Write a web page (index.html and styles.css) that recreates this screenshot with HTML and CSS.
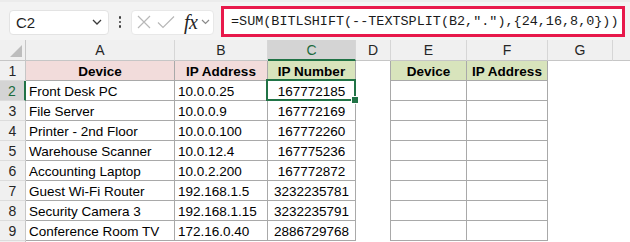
FILE: index.html
```html
<!DOCTYPE html>
<html>
<head>
<meta charset="utf-8">
<link rel="stylesheet" href="styles.css">
</head>
<body>
<div class="app">
  <div class="toolbar">
    <div class="namebox">
      <span class="ref">C2</span>
      <svg class="nb-chev" width="10" height="6" viewBox="0 0 10 6"><path d="M1 1 L5 5 L9 1" fill="none" stroke="#3a3a3a" stroke-width="1.3"/></svg>
    </div>
    <div class="dots"><i></i><i></i><i></i></div>
    <div class="fxbox">
      <svg class="ic-x" width="14" height="14" viewBox="0 0 14 14"><path d="M1 1 L13 13 M13 1 L1 13" stroke="#b8b8b8" stroke-width="1.2" fill="none"/></svg>
      <svg class="ic-ok" width="18" height="14" viewBox="0 0 18 14"><path d="M1 7.5 L6 12.5 L17 1.5" stroke="#b8b8b8" stroke-width="1.2" fill="none"/></svg>
      <span class="fx">fx</span>
      <svg class="fx-chev" width="9" height="6" viewBox="0 0 9 6"><path d="M1 1 L4.5 4.5 L8 1" fill="none" stroke="#8a8a8a" stroke-width="1.2"/></svg>
    </div>
    <div class="formula">=SUM(BITLSHIFT(--TEXTSPLIT(B2,"."),{24,16,8,0}))</div>
  </div>

  <div class="sheet">
    <div class="corner"><svg width="12" height="12" viewBox="0 0 12 12"><polygon points="12,0 12,12 0,12" fill="#bdbdbd"/></svg></div>
    <div class="ch">A</div>
    <div class="ch">B</div>
    <div class="ch sel">C</div>
    <div class="ch">D</div>
    <div class="ch">E</div>
    <div class="ch">F</div>
    <div class="ch">G</div>
    <div class="ch last"></div>

    <div class="rh">1</div>
    <div class="c hp">Device</div>
    <div class="c hp">IP Address</div>
    <div class="c hg">IP Number</div>
    <div class="e dr"></div>
    <div class="c hg">Device</div>
    <div class="c hg">IP Address</div>
    <div class="e"></div>
    <div class="e"></div>

    <div class="rh sel">2</div>
    <div class="c">Front Desk PC</div>
    <div class="c">10.0.0.25</div>
    <div class="c num active">167772185</div>
    <div class="e dr"></div>
    <div class="c"></div>
    <div class="c"></div>
    <div class="e"></div>
    <div class="e"></div>

    <div class="rh">3</div>
    <div class="c">File Server</div>
    <div class="c">10.0.0.9</div>
    <div class="c num">167772169</div>
    <div class="e dr"></div>
    <div class="c"></div>
    <div class="c"></div>
    <div class="e"></div>
    <div class="e"></div>

    <div class="rh">4</div>
    <div class="c">Printer - 2nd Floor</div>
    <div class="c">10.0.0.100</div>
    <div class="c num">167772260</div>
    <div class="e dr"></div>
    <div class="c"></div>
    <div class="c"></div>
    <div class="e"></div>
    <div class="e"></div>

    <div class="rh">5</div>
    <div class="c">Warehouse Scanner</div>
    <div class="c">10.0.12.4</div>
    <div class="c num">167775236</div>
    <div class="e dr"></div>
    <div class="c"></div>
    <div class="c"></div>
    <div class="e"></div>
    <div class="e"></div>

    <div class="rh">6</div>
    <div class="c">Accounting Laptop</div>
    <div class="c">10.0.2.200</div>
    <div class="c num">167772872</div>
    <div class="e dr"></div>
    <div class="c"></div>
    <div class="c"></div>
    <div class="e"></div>
    <div class="e"></div>

    <div class="rh">7</div>
    <div class="c">Guest Wi-Fi Router</div>
    <div class="c">192.168.1.5</div>
    <div class="c num">3232235781</div>
    <div class="e dr"></div>
    <div class="c"></div>
    <div class="c"></div>
    <div class="e"></div>
    <div class="e"></div>

    <div class="rh">8</div>
    <div class="c">Security Camera 3</div>
    <div class="c">192.168.1.15</div>
    <div class="c num">3232235791</div>
    <div class="e dr"></div>
    <div class="c"></div>
    <div class="c"></div>
    <div class="e"></div>
    <div class="e"></div>

    <div class="rh">9</div>
    <div class="c">Conference Room TV</div>
    <div class="c">172.16.0.40</div>
    <div class="c num">2886729768</div>
    <div class="e dr"></div>
    <div class="c"></div>
    <div class="c"></div>
    <div class="e"></div>
    <div class="e"></div>

    <div class="rh"></div>
    <div class="e"></div>
    <div class="e"></div>
    <div class="e"></div>
    <div class="e"></div>
    <div class="e"></div>
    <div class="e"></div>
    <div class="e"></div>
    <div class="e"></div>
  </div>
</div>
</body>
</html>
```

FILE: styles.css
```css
* { box-sizing: border-box; }
html, body { margin: 0; padding: 0; background: #fff; }
.app { width: 630px; height: 242px; overflow: hidden; font-family: "Liberation Sans", Arial, sans-serif; }

.toolbar {
  height: 40px;
  background: #f3f3f3;
  display: flex;
  align-items: center;
  padding-left: 9px;
  border-top: 2px solid #ececec;
}
.namebox {
  width: 100px;
  height: 25px;
  background: #fff;
  border: 1px solid #e3e3e3;
  border-radius: 4px;
  display: flex;
  align-items: center;
  padding-left: 6px;
  margin-top: 2px;
}
.ref { font-size: 15px; color: #1f1f1f; flex: 1; }
.nb-chev { margin-right: 6px; }
.dots {
  width: 22px;
  display: flex;
  flex-direction: column;
  align-items: center;
  gap: 2px;
  margin-top: 2px;
}
.dots i { width: 2.5px; height: 2.5px; background: #3c3c3c; border-radius: 1px; display: block; }
.fxbox {
  width: 83px;
  height: 25px;
  background: #fff;
  border: 1px solid #e8e8e8;
  border-radius: 4px;
  display: flex;
  align-items: center;
  padding-left: 5px;
  margin-top: 2px;
}
.ic-ok { margin-left: 6px; }
.fx { font-family: "Liberation Serif", serif; font-style: italic; font-size: 20px; color: #262626; margin-left: 9px; line-height: 1; letter-spacing: -0.5px; }
.fx-chev { margin-left: 4px; }
.formula {
  margin-left: 7px;
  width: 404px;
  height: 31px;
  border: 3.5px solid #e8194b;
  background: #fff;
  font-family: "Liberation Mono", "DejaVu Sans Mono", monospace;
  font-size: 13.46px;
  color: #1a1a1a;
  display: flex;
  align-items: center;
  padding-left: 7px;
  white-space: nowrap;
}

.sheet {
  display: grid;
  grid-template-columns: 26px 149px 93px 88px 35px 76px 81px 65px 1fr;
  grid-template-rows: 21px repeat(10, 20px);
  font-size: 13.5px;
  color: #000;
}
.corner {
  background: #f0f0f0;
  border-right: 1px solid #c6c6c6;
  border-bottom: 1px solid #c6c6c6;
  display: flex;
  align-items: flex-end;
  justify-content: flex-end;
  padding: 0 3px 3px 0;
}
.ch {
  background: #f0f0f0;
  border-right: 1px solid #d6d6d6;
  border-bottom: 1px solid #c6c6c6;
  text-align: center;
  line-height: 21px;
  color: #262626;
  font-size: 14px;
}
.ch.last { border-right: none; }
.ch.sel {
  background: #d4d4d4;
  color: #1c6b3e;
  border-bottom: 2px solid #217346;
}
.rh {
  background: #f0f0f0;
  border-right: 1px solid #c6c6c6;
  border-bottom: 1px solid #dcdcdc;
  text-align: center;
  line-height: 21px;
  color: #262626;
  font-size: 14px;
}
.rh.sel {
  background: #d4d4d4;
  color: #1c6b3e;
  border-right: 2px solid #217346;
}
.c {
  border-right: 1px solid #a9a9a9;
  border-bottom: 1px solid #a9a9a9;
  padding: 0 3px;
  line-height: 21px;
  white-space: nowrap;
}
.hp { background: #f2dcdb; font-weight: 700; text-align: center; }
.hg { background: #d8e4bc; font-weight: 700; text-align: center; }
.num { text-align: center; }
.dr { border-right: 1px solid #a9a9a9; }
.active { position: relative; }
.active::before {
  content: "";
  position: absolute;
  left: -2px; top: -2px; right: -1px; bottom: -1px;
  border: 2px solid #217346;
}
.active::after {
  content: "";
  position: absolute;
  right: -4px; bottom: -4px;
  width: 6px; height: 6px;
  background: #217346;
  border: 1px solid #fff;
}
```
